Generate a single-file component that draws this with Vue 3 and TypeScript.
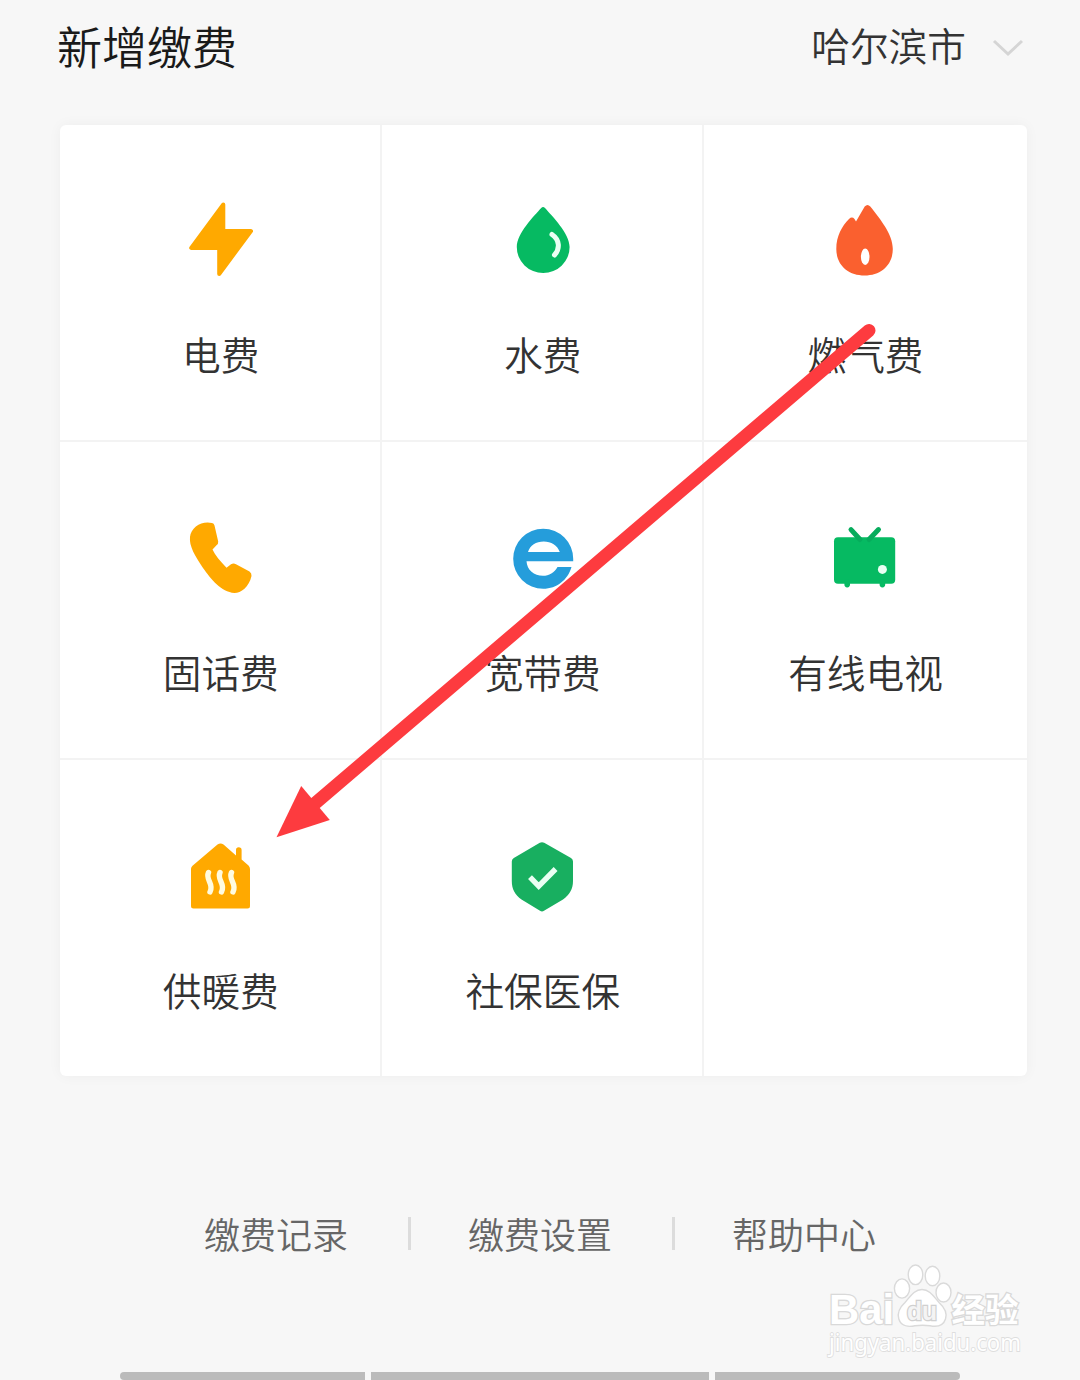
<script setup lang="ts">
type IconName = 'bolt' | 'drop' | 'flame' | 'phone' | 'web' | 'tv' | 'house' | 'shield'

interface Service {
  label: string
  icon: IconName
  view: string
}

const services: Service[] = [
  { label: '电费', icon: 'bolt', view: '170 190 100 100' },
  { label: '水费', icon: 'drop', view: '492 190 100 100' },
  { label: '燃气费', icon: 'flame', view: '816 190 100 100' },
  { label: '固话费', icon: 'phone', view: '170 507 100 100' },
  { label: '宽带费', icon: 'web', view: '492 507 100 100' },
  { label: '有线电视', icon: 'tv', view: '816 507 100 100' },
  { label: '供暖费', icon: 'house', view: '170 825 100 100' },
  { label: '社保医保', icon: 'shield', view: '492 825 100 100' },
]

const links: string[] = ['缴费记录', '缴费设置', '帮助中心']
</script>

<template>
  <main class="page">
    <header class="header">
      <h1 class="title">新增缴费</h1>
      <div class="city">
        <span class="city-name">哈尔滨市</span>
        <svg class="chevron" width="34" height="20" viewBox="0 0 34 20">
          <path d="M3 3 L17 16 L31 3" />
        </svg>
      </div>
    </header>

    <section class="grid">
      <div v-for="s in services" :key="s.label" class="cell">
        <svg class="icon" width="100" height="100" :viewBox="s.view">
          <g v-if="s.icon === 'bolt'" fill="#ffa900" stroke="#ffa900" stroke-width="4" stroke-linejoin="round">
            <path d="M223.3 204.5 L191.2 248 H219.2 V274 L251 231 H223.3 Z" />
          </g>
          <g v-else-if="s.icon === 'drop'">
            <path fill="#06ba62" d="M541.2 208 Q543 206 545 208 C552 216 569.6 233.5 569.6 247 A26.4 26 0 0 1 516.8 247 C516.8 233.5 534 216 541.2 208 Z" />
            <path fill="none" stroke="#e9fff3" stroke-width="5" stroke-linecap="round" d="M552 234.5 C560 240 560 249 554.5 255" />
          </g>
          <g v-else-if="s.icon === 'flame'">
            <path fill="#fa602f" d="M864.7 206.5 Q867.5 203.5 870.3 206.5 C880 219 892.8 234 892.8 249 C892.8 265 881 275.5 864.6 275.5 C848 275.5 836.3 265 836.3 249 C836.3 236 842 226 849 219 Q852 216.2 854.5 219 L856 221.5 Z" />
            <ellipse cx="865.2" cy="256.7" rx="4.3" ry="8.2" fill="#fff" />
          </g>
          <g v-else-if="s.icon === 'phone'">
            <path fill="#ffa900" d="M190 537 C191 527 202 520.5 212 523 Q214 523.4 214.5 525.5 L218.2 541.5 Q218.5 543.8 216.5 545.2 L212.5 549.5 C215 555 220 561 226.5 567.7 L231 564.3 Q233.5 562.8 236 564.2 L249.5 571.5 Q251.8 573 251.5 576 C249 587 241 593 234.5 593 C221 592 211 579 203 568 C195 556 189 546 190 537 Z" />
          </g>
          <g v-else-if="s.icon === 'web'">
            <path fill="#259ddb" fill-rule="evenodd" d="M573.2 561.3 H526.5 C527 570 534 575.8 543 575.8 C549 575.8 554.5 572.5 557.5 567 H571.5 C568 579.5 557 588.8 543.2 588.8 A30 30 0 1 1 573.2 558.8 Z M528 552 H559.8 C557.5 545.5 551 541.5 543.8 541.5 C536 541.5 530 545.5 528 552 Z" />
          </g>
          <g v-else-if="s.icon === 'tv'">
            <rect x="834" y="537.2" width="61.2" height="46.6" rx="4" fill="#06ba62" />
            <path fill="none" stroke="#06ac5c" stroke-width="5" stroke-linecap="round" d="M851 529.6 L860 539.5 M878.5 529.6 L869 539.5" />
            <path fill="none" stroke="#06ba62" stroke-width="5.6" stroke-linecap="round" d="M847.2 582 V584.6 M882.4 582 V584.6" />
            <circle cx="882.4" cy="569.4" r="4.5" fill="#e9fff3" />
          </g>
          <g v-else-if="s.icon === 'house'">
            <path fill="#ffa900" d="M217.5 844.6 Q220.5 842.2 223.5 844.6 L236 855.5 V850 Q236 847.3 238.7 847.3 Q241.6 847.3 241.6 850 V859.5 L248.5 865.5 Q250 867 250 869 V906 Q250 908.5 247.5 908.5 H193.5 Q191 908.5 191 906 V869 Q191 867 192.5 865.7 Z" />
            <g fill="none" stroke="#fffbe0" stroke-width="5.4" stroke-linecap="round">
              <path d="M208.5 872.5 C205 880 214.5 884 210 892" />
              <path d="M220 872.5 C216.5 880 226 884 221.5 892" />
              <path d="M231.5 872.5 C228 880 237.5 884 233 892" />
            </g>
          </g>
          <g v-else>
            <path fill="#18af60" d="M539.8 842.7 Q542 841.6 544.2 842.7 L571 858 Q573 859.3 573 861.5 V881 C573 889 569.5 895 563 899.5 L544 910.8 Q542 912 540 910.8 L521.5 899.5 C515 895 511.8 889 511.8 881 V861.5 Q511.8 859.3 513.8 858 Z" />
            <path fill="none" stroke="#e9fff3" stroke-width="5.4" d="M530 877.2 L538.7 886.2 L555.6 869" />
          </g>
        </svg>
        <span class="label">{{ s.label }}</span>
      </div>
      <div class="cell"></div>
    </section>

    <nav class="links">
      <template v-for="(link, i) in links" :key="link">
        <i v-if="i > 0" class="divider"></i>
        <span class="link">{{ link }}</span>
      </template>
    </nav>

    <div class="bars">
      <i class="bar first"></i>
      <i class="bar middle"></i>
      <i class="bar last"></i>
    </div>

    <svg class="arrow" width="1080" height="1380" viewBox="0 0 1080 1380">
      <path d="M869 330.5 L312 806" fill="none" stroke="#fd3b3f" stroke-width="13" stroke-linecap="round" />
      <path d="M276.5 837.3 L301.2 786 L329.8 820 Z" fill="#fd3b3f" />
    </svg>

    <svg class="watermark" width="220" height="120" viewBox="820 1255 220 120">
      <g fill="#fff" stroke="#dadada" stroke-width="1.4">
        <ellipse cx="902" cy="1288.5" rx="7.6" ry="9.6" />
        <ellipse cx="915.5" cy="1274.8" rx="7.3" ry="9.8" />
        <ellipse cx="932.5" cy="1276" rx="7.3" ry="9.8" />
        <ellipse cx="943.5" cy="1292.5" rx="7.5" ry="9.5" />
        <path d="M922 1289.5 C930 1289.5 934 1297 939 1302.5 C945 1308 947.5 1313 945.5 1319 C943 1326.5 936 1327 930 1325.8 C925 1325 920 1325 915 1325.8 C909 1327 901 1326.5 898.8 1319 C897 1313 899 1308 905 1302.5 C910 1297 914 1289.5 922 1289.5 Z" />
      </g>
      <g class="brand">
        <text class="latin" x="829" y="1324" font-size="42" textLength="65" lengthAdjust="spacingAndGlyphs">Bai</text>
        <text class="latin du" x="907" y="1320" font-size="26" textLength="30" lengthAdjust="spacingAndGlyphs">du</text>
        <text class="cjk" x="951.5" y="1321.5" font-size="33" textLength="67" lengthAdjust="spacingAndGlyphs">经验</text>
      </g>
      <text class="url" x="829" y="1350.5" font-size="24" textLength="192" lengthAdjust="spacingAndGlyphs">jingyan.baidu.com</text>
    </svg>
  </main>
</template>

<style>
body {
  margin: 0;
  background: #f7f7f7;
}
</style>

<style scoped>
.page {
  position: relative;
  box-sizing: border-box;
  display: flex;
  flex-direction: column;
  width: 1080px;
  height: 1380px;
  overflow: hidden;
  background: #f7f7f7;
  font-family: "Noto Sans CJK SC", sans-serif;
  font-weight: 350;
}

.header {
  display: flex;
  justify-content: space-between;
  align-items: flex-start;
  box-sizing: border-box;
  height: 96px;
  margin-bottom: 29px;
  padding: 16px 55px 0 57px;
}

.title {
  margin: 0;
  font-size: 45px;
  font-weight: inherit;
  line-height: 60px;
  color: #1a1a1a;
}

.city {
  display: flex;
  align-items: center;
  font-size: 38.7px;
  line-height: 60px;
  color: #333;
}

.city-name {
  height: 64px;
  margin-top: -2px;
}

.chevron {
  margin-left: 25px;
  margin-top: 2px;
  fill: none;
  stroke: #d5d5d5;
  stroke-width: 3;
}

.grid {
  display: grid;
  grid-template-columns: 320px 320px 323px;
  grid-template-rows: 315px 316px 316px;
  gap: 2px;
  width: 967px;
  margin-left: 60px;
  border-radius: 6px;
  background: #f3f3f3;
  box-shadow: 0 0 14px rgba(0, 0, 0, 0.045);
}

.cell {
  box-sizing: border-box;
  display: flex;
  flex-direction: column;
  align-items: center;
  padding-top: 65px;
  background: #fff;
}

.cell:first-child { border-top-left-radius: 6px; }
.cell:nth-child(3) { border-top-right-radius: 6px; }
.cell:nth-child(7) { border-bottom-left-radius: 6px; }
.cell:last-child { border-bottom-right-radius: 6px; }

.icon {
  display: block;
}

.label {
  margin-top: 36px;
  padding-left: 1.5px;
  font-size: 38.7px;
  line-height: 54px;
  color: #333;
}

.cell:nth-child(n + 4) .label {
  margin-top: 37px;
}

.cell:nth-child(3n) .label {
  padding-left: 0;
}

.links {
  display: flex;
  align-items: center;
  justify-content: center;
  height: 60px;
  margin-top: 127px;
}

.link {
  margin-top: -1px;
  font-size: 36px;
  line-height: 60px;
  color: #666;
}

.divider {
  width: 3px;
  height: 33px;
  margin: 0 57px 0 60px;
  background: #dcdcdc;
}

.bars {
  display: flex;
  gap: 6px;
  margin-top: auto;
  padding: 0 120px;
}

.bar {
  height: 8px;
  background: #bbb;
}

.first { width: 245px; border-radius: 4px 0 0 4px; }
.middle { width: 338px; }
.last { width: 245px; border-radius: 0 4px 4px 0; }

.arrow {
  position: absolute;
  top: 0;
  left: 0;
}

.watermark {
  position: absolute;
  top: 1255px;
  left: 820px;
}

.brand {
  fill: #fff;
  stroke: #d9d9d9;
  stroke-width: 2.6px;
  paint-order: stroke;
}

.latin {
  font-family: "Liberation Sans", sans-serif;
  font-weight: 700;
}

.du {
  fill: #f4f4f4;
  stroke: #d0d0d0;
}

.cjk {
  font-family: "Noto Sans CJK SC", sans-serif;
  font-weight: 700;
}

.url {
  font-family: "Noto Sans", sans-serif;
  font-weight: 400;
  fill: #fff;
  stroke: #dedede;
  stroke-width: 1.8px;
  paint-order: stroke;
}
</style>
